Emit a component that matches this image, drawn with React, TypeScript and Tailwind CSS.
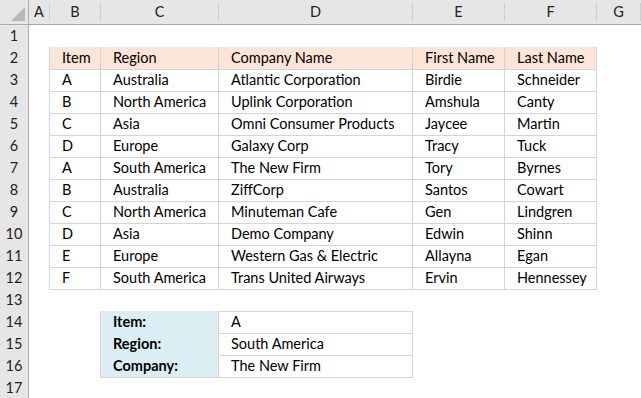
import React from 'react';

const letters = ['A', 'B', 'C', 'D', 'E', 'F', 'G'];

const heads = ['Item', 'Region', 'Company Name', 'First Name', 'Last Name'];

const people = [
  ['A', 'Australia', 'Atlantic Corporation', 'Birdie', 'Schneider'],
  ['B', 'North America', 'Uplink Corporation', 'Amshula', 'Canty'],
  ['C', 'Asia', 'Omni Consumer Products', 'Jaycee', 'Martin'],
  ['D', 'Europe', 'Galaxy Corp', 'Tracy', 'Tuck'],
  ['A', 'South America', 'The New Firm', 'Tory', 'Byrnes'],
  ['B', 'Australia', 'ZiffCorp', 'Santos', 'Cowart'],
  ['C', 'North America', 'Minuteman Cafe', 'Gen', 'Lindgren'],
  ['D', 'Asia', 'Demo Company', 'Edwin', 'Shinn'],
  ['E', 'Europe', 'Western Gas & Electric', 'Allayna', 'Egan'],
  ['F', 'South America', 'Trans United Airways', 'Ervin', 'Hennessey'],
];

const lookup = [
  ['Item:', 'A'],
  ['Region:', 'South America'],
  ['Company:', 'The New Firm'],
];

const line = 'border-[#d4d4d4]';

// what goes into a cell: text, background, borders, bold
type Cell = { text?: string; bg?: string; r?: boolean; b?: boolean; bold?: boolean };

function cellsFor(row: number): Cell[] {
  const cells: Cell[] = letters.map(() => ({}));
  // top edge of the data table
  if (row === 1) for (let c = 1; c <= 5; c++) cells[c].b = true;
  if (row >= 2 && row <= 12) {
    cells[0].r = true;
    const vals = row === 2 ? heads : people[row - 3];
    vals.forEach((v, i) => {
      cells[i + 1] = { text: v, r: true, b: true, bg: row === 2 ? 'bg-[#fce4d6]' : undefined };
    });
  }
  // top edge of the lookup box
  if (row === 13) {
    cells[2].b = true;
    cells[3].b = true;
  }
  if (row >= 14 && row <= 16) {
    const [label, value] = lookup[row - 14];
    cells[1].r = true;
    cells[2] = { text: label, r: true, b: true, bold: true, bg: 'bg-[#daeef3]' };
    cells[3] = { text: value, r: true, b: true };
  }
  return cells;
}

const grid = 'grid grid-cols-[29px_21px_51px_118px_194px_92px_92px_1fr]';

export default function App() {
  const rows = Array.from({ length: 17 }, (_, i) => i + 1);

  return (
    <div className="w-[641px] h-[398px] overflow-hidden bg-white text-[14.5px] text-black" style={{ fontFamily: 'Lato, "Liberation Sans", sans-serif' }}>
      <div className={`${grid} h-[25px] bg-[#e6e6e6] border-b border-[#ababab]`}>
        <div className="relative border-r border-[#ababab]">
          <svg className="absolute right-[3px] bottom-[3px]" width="14" height="14" viewBox="0 0 14 14">
            <polygon points="14,0 14,14 0,14" fill="#b7b7b7" />
          </svg>
        </div>
        {letters.map((l) => (
          <div key={l} className="flex items-center justify-center text-[#222] border-r border-[#d0d0d0] my-[3px] leading-none">
            {l}
          </div>
        ))}
      </div>

      {rows.map((r) => (
        <div key={r} className={`${grid} h-[22px]`}>
          <div className="flex items-center justify-center bg-[#e6e6e6] border-r border-b border-r-[#ababab] border-b-[#d0d0d0] text-[#222]">
            {r}
          </div>
          {cellsFor(r).map((c, i) => (
            <div
              key={i}
              className={[
                'flex items-center pl-3 whitespace-nowrap overflow-hidden',
                c.bg ?? '',
                c.r ? `border-r ${line}` : '',
                c.b ? `border-b ${line}` : '',
                c.bold ? 'font-bold' : '',
              ].join(' ')}
            >
              {c.text}
            </div>
          ))}
        </div>
      ))}
    </div>
  );
}
